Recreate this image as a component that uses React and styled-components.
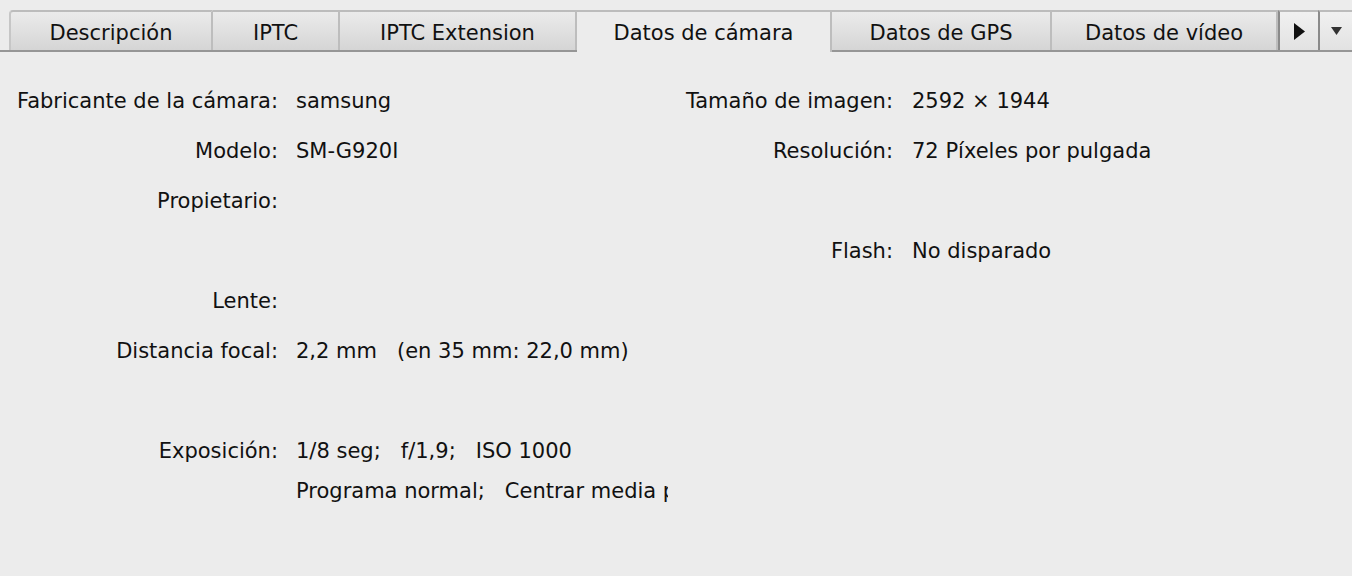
import React from "react";
import styled, { createGlobalStyle } from "styled-components";

const GlobalStyle = createGlobalStyle`
  html, body {
    margin: 0;
    padding: 0;
    background: #ececec;
  }
  body {
    font-family: "DejaVu Sans", "Liberation Sans", sans-serif;
    color: #111;
  }
`;

const Window = styled.div`
  width: 1352px;
  height: 576px;
  overflow: hidden;
  background: #ececec;
`;

const TabBar = styled.div`
  display: flex;
  align-items: flex-end;
  height: 50px;
  padding-left: 9px;
  border-bottom: 2px solid #969696;
`;

const Tab = styled.div`
  box-sizing: border-box;
  flex: none;
  width: ${(p) => p.$w}px;
  height: ${(p) => (p.$active ? 42 : 40)}px;
  margin-bottom: ${(p) => (p.$active ? -2 : 0)}px;
  display: flex;
  align-items: center;
  justify-content: center;
  padding-top: 3px;
  padding-bottom: ${(p) => (p.$active ? 2 : 0)}px;
  border-top: 2px solid #bcbcbc;
  border-right: 2px solid #bdbdbd;
  border-left: ${(p) => (p.$first ? "2px solid #c6c6c6" : "none")};
  border-top-left-radius: ${(p) => (p.$first ? 4 : 0)}px;
  background: ${(p) =>
    p.$active ? "#ececec" : "linear-gradient(#ebebeb, #d5d5d5)"};
  font-size: 21px;
  white-space: nowrap;
`;

const ScrollButton = styled.div`
  box-sizing: border-box;
  flex: none;
  width: ${(p) => p.$w}px;
  height: 40px;
  display: flex;
  align-items: center;
  justify-content: center;
  border-top: 2px solid #bcbcbc;
  border-left: 2px solid #8a8a8a;
  background: linear-gradient(#f1f1f1, #e2e2e2);
`;

const Fields = styled.div`
  display: grid;
  grid-template-columns: 296px 372px 244px 1fr;
  grid-auto-rows: minmax(50px, auto);
  padding-top: 24px;
  font-size: 21px;
`;

const Label = styled.div`
  text-align: right;
  padding-right: ${(p) => p.$pad}px;
  line-height: 50px;
  white-space: nowrap;
`;

const Value = styled.div`
  line-height: 50px;
  white-space: nowrap;
  overflow: hidden;
`;

const MultiValue = styled.div`
  line-height: 40px;
  padding-top: 5px;
  white-space: nowrap;
  overflow: hidden;
`;

const tabs = [
  { name: "Descripción", w: 204 },
  { name: "IPTC", w: 127 },
  { name: "IPTC Extension", w: 237 },
  { name: "Datos de cámara", w: 255, active: true },
  { name: "Datos de GPS", w: 220 },
  { name: "Datos de vídeo", w: 226 },
];

const rows = [
  ["Fabricante de la cámara:", "samsung", "Tamaño de imagen:", "2592 × 1944"],
  ["Modelo:", "SM-G920I", "Resolución:", "72 Píxeles por pulgada"],
  ["Propietario:", "", "", ""],
  ["", "", "Flash:", "No disparado"],
  ["Lente:", "", "", ""],
  ["Distancia focal:", "2,2 mm\u00a0\u00a0\u00a0(en 35 mm: 22,0 mm)", "", ""],
  ["", "", "", ""],
];

const exposure = [
  "1/8 seg;\u00a0\u00a0\u00a0f/1,9;\u00a0\u00a0\u00a0ISO 1000",
  "Programa normal;\u00a0\u00a0\u00a0Centrar media ponderada",
];

export default function App() {
  return (
    <Window>
      <GlobalStyle />
      <TabBar>
        {tabs.map((t, i) => (
          <Tab key={t.name} $w={t.w} $active={t.active} $first={i === 0}>
            {t.name}
          </Tab>
        ))}
        <ScrollButton $w={40}>
          <svg width="11" height="17" viewBox="0 0 11 17">
            <path d="M0 0 L11 8.5 L0 17 Z" fill="#111" />
          </svg>
        </ScrollButton>
        <ScrollButton $w={34}>
          <svg width="11" height="8" viewBox="0 0 11 8">
            <path d="M0 0 H11 L5.5 8 Z" fill="#333" />
          </svg>
        </ScrollButton>
      </TabBar>
      <Fields>
        {rows.map((r, i) => (
          <React.Fragment key={i}>
            <Label $pad={18}>{r[0]}</Label>
            <Value>{r[1]}</Value>
            <Label $pad={19}>{r[2]}</Label>
            <Value>{r[3]}</Value>
          </React.Fragment>
        ))}
        <Label $pad={18}>Exposición:</Label>
        <MultiValue>
          {exposure.map((line) => (
            <div key={line}>{line}</div>
          ))}
        </MultiValue>
      </Fields>
    </Window>
  );
}
